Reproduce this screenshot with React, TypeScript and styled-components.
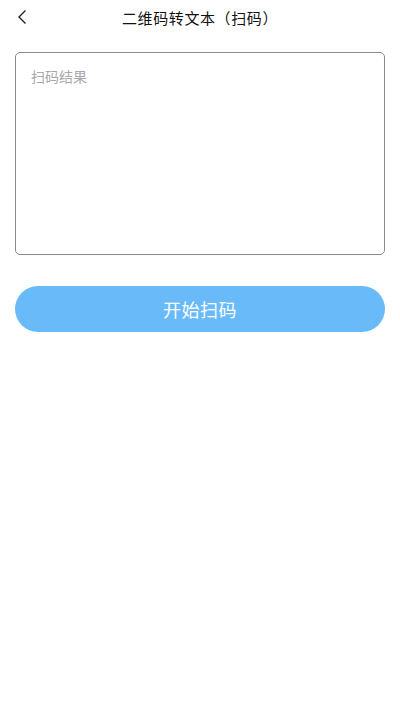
import styled, { createGlobalStyle } from "styled-components";

const GlobalStyle = createGlobalStyle`
  html, body {
    margin: 0;
    padding: 0;
    background: #ffffff;
  }
  body {
    font-family: "Noto Sans CJK SC", "Noto Sans", sans-serif;
  }
`;

const StyledPage = styled.div`
  width: 400px;
  min-height: 711px;
  background: #fff;
`;

const StyledHeader = styled.header`
  height: 34px;
  display: flex;
  align-items: center;
  justify-content: center;
  position: relative;
`;

const BackButton = styled.button`
  position: absolute;
  left: 12px;
  top: 7px;
  width: 20px;
  height: 20px;
  padding: 0;
  border: none;
  background: none;
  display: flex;
  align-items: center;
  justify-content: center;
`;

const StyledTitle = styled.h1`
  margin: 0;
  font-size: 15px;
  font-weight: 400;
  color: #111;
  letter-spacing: 0.6px;
`;

const StyledMain = styled.main`
  padding: 18px 15px 0;
  display: flex;
  flex-direction: column;
  gap: 31px;
`;

const ResultBox = styled.textarea`
  box-sizing: border-box;
  width: 370px;
  height: 203px;
  border: 1px solid #8a8a8a;
  border-radius: 5px;
  padding: 13px 15px;
  resize: none;
  font-family: inherit;
  font-size: 14px;
  color: #333;
  outline: none;

  &::placeholder {
    color: #a8a8a8;
  }
`;

const ScanButton = styled.button`
  width: 370px;
  height: 46px;
  border: none;
  border-radius: 23px;
  background: #68bbf8;
  color: #fff;
  font-family: inherit;
  font-size: 18px;
  letter-spacing: 0.5px;
`;

export default function App() {
  return (
    <StyledPage>
      <GlobalStyle />
      <StyledHeader>
        <BackButton aria-label="返回">
          <svg width="12" height="16" viewBox="0 0 12 16">
            <path d="M9.5 1.5 L3 8 L9.5 14.5" fill="none" stroke="#222" strokeWidth="1.4" />
          </svg>
        </BackButton>
        <StyledTitle>二维码转文本（扫码）</StyledTitle>
      </StyledHeader>
      <StyledMain>
        <ResultBox placeholder="扫码结果" readOnly />
        <ScanButton>开始扫码</ScanButton>
      </StyledMain>
    </StyledPage>
  );
}
